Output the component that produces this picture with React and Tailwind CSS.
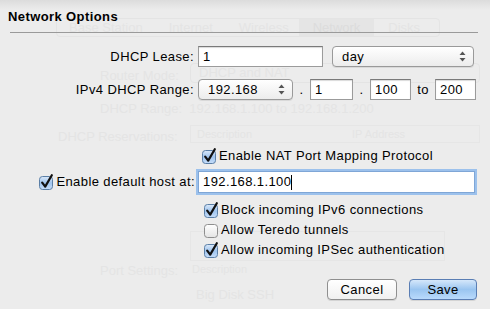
import React from "react";

const font = { fontFamily: '"Liberation Sans", Arial, sans-serif', letterSpacing: "0.4px" };

function Check({ on }) {
  return (
    <svg width="16" height="16" viewBox="0 0 16 16" className="shrink-0">
      <defs>
        <linearGradient id="cbOn" x1="0" y1="0" x2="0" y2="1">
          <stop offset="0" stopColor="#dbe9f9" />
          <stop offset="0.5" stopColor="#9fc4ee" />
          <stop offset="1" stopColor="#c7defa" />
        </linearGradient>
        <linearGradient id="cbOff" x1="0" y1="0" x2="0" y2="1">
          <stop offset="0" stopColor="#ffffff" />
          <stop offset="1" stopColor="#e4e4e4" />
        </linearGradient>
      </defs>
      <rect x="1.5" y="2.5" width="13" height="13" rx="3" fill={on ? "url(#cbOn)" : "url(#cbOff)"} stroke={on ? "#5b7fa6" : "#8e8e8e"} />
      {on && (
        <path d="M4.2 8.6 L7.2 12.6 L13.8 1.2" fill="none" stroke="#111" strokeWidth="2.2" strokeLinecap="round" strokeLinejoin="round" />
      )}
    </svg>
  );
}

function Arrows() {
  return (
    <svg width="7" height="11" viewBox="0 0 7 11">
      <path d="M3.5 0.5 L6.5 4 L0.5 4 Z" fill="#555" />
      <path d="M3.5 10.5 L6.5 7 L0.5 7 Z" fill="#555" />
    </svg>
  );
}

function Field({ w, value }) {
  return (
    <div className={`h-[21px] bg-white border border-[#9b9b9b] border-t-[#7a7a7a] shadow-[inset_0_1px_1px_rgba(0,0,0,0.15)] flex items-center px-[4px] text-[13px] text-black ${w}`}>
      {value}
    </div>
  );
}

function Select({ w, value }) {
  return (
    <div className={`h-[21px] rounded-[4px] border border-[#9a9a9a] bg-gradient-to-b from-white to-[#ececec] shadow-[0_1px_0_rgba(0,0,0,0.08)] flex items-center justify-between pl-[9px] pr-[7px] text-[13px] text-black ${w}`}>
      <span>{value}</span>
      <Arrows />
    </div>
  );
}

export default function App() {
  return (
    <div className="relative w-[490px] h-[309px] overflow-hidden bg-[#ececec] text-black" style={font}>
      {/* ghost window behind the sheet */}
      <div className="absolute inset-0 text-[13px] tracking-normal whitespace-nowrap text-[#e4e4e4] pointer-events-none">
        <div className="absolute left-[56px] top-[18px] w-[384px] h-[19px] rounded-[4px] border border-[#e4e4e4] flex items-center">
          <span className="ml-[12px]">Base Station</span>
          <span className="ml-[26px]">Internet</span>
          <span className="ml-[26px]">Wireless</span>
          <span className="ml-[10px] px-[14px] h-full bg-[#e5e5e5] text-[#dcdcdc] flex items-center">Network</span>
          <span className="ml-[14px]">Disks</span>
        </div>
        <div className="absolute left-[100px] top-[66px]">Router Mode:</div>
        <div className="absolute left-[190px] top-[63px] w-[290px] h-[20px] rounded-[4px] border border-[#e4e4e4] pl-[8px] flex items-center">DHCP and NAT</div>
        <div className="absolute left-[100px] top-[99px]">DHCP Range:&nbsp;&nbsp;192.168.1.100 to 192.168.1.200</div>
        <div className="absolute left-[58px] top-[127px]">DHCP Reservations:</div>
        <div className="absolute left-[190px] top-[125px] w-[290px] h-[18px] border border-[#e6e6e6] text-[11px] flex items-center pl-[6px]">
          <span>Description</span>
          <span className="ml-[100px]">IP Address</span>
        </div>
        <div className="absolute left-[190px] top-[231px] w-[255px] h-[30px] border border-[#e6e6e6]" />
        <div className="absolute left-[100px] top-[261px]">Port Settings:</div>
        <div className="absolute left-[192px] top-[261px] text-[11px]">Description</div>
        <div className="absolute left-[196px] top-[285px]">Big Disk SSH</div>
      </div>

      {/* sheet */}
      <div className="relative flex flex-col h-full">
        <div className="h-[10px] bg-gradient-to-b from-[#dcdcdc] to-[#ececec]" />
        <div className="pl-[8px] -mt-[1px] text-[13px] font-bold leading-[16px]">Network Options</div>
        <div className="mx-[10px] mt-[7px] h-px bg-[#9a9a9a] w-[468px]" />

        <div className="flex items-center mt-[13px] h-[21px]">
          <div className="w-[198px] text-right text-[13px] pr-[4px]">DHCP Lease:</div>
          <Field w="w-[125px]" value="1" />
          <div className="ml-[9px]"><Select w="w-[142px]" value="day" /></div>
        </div>

        <div className="flex items-center mt-[12px] h-[21px] text-[13px]">
          <div className="w-[198px] text-right pr-[4px]">IPv4 DHCP Range:</div>
          <Select w="w-[95px]" value="192.168" />
          <span className="w-[17px] text-center">.</span>
          <Field w="w-[43px]" value="1" />
          <span className="w-[17px] text-center">.</span>
          <Field w="w-[41px]" value="100" />
          <span className="w-[24px] text-center">to</span>
          <Field w="w-[41px]" value="200" />
        </div>

        <div className="flex items-center mt-[48px] ml-[201px] h-[16px] gap-[2px] text-[13px]">
          <Check on />
          <span>Enable NAT Port Mapping Protocol</span>
        </div>

        <div className="flex items-center mt-[7px] h-[22px] text-[13px]">
          <div className="w-[198px] flex items-center justify-end gap-[2px] pr-[3px]">
            <Check on />
            <span>Enable default host at:</span>
          </div>
          <div className="w-[277px] h-[22px] bg-white border border-[#7fa6d6] shadow-[0_0_0_2px_#9cc1ec] flex items-center px-[4px]">
            <span>192.168.1.100</span>
            <span className="w-px h-[15px] bg-black" />
          </div>
        </div>

        <div className="flex flex-col ml-[203px] mt-[9px] text-[13px] gap-[4px]">
          <div className="flex items-center gap-[2px] h-[16px]"><Check on /><span>Block incoming IPv6 connections</span></div>
          <div className="flex items-center gap-[2px] h-[16px]"><Check /><span>Allow Teredo tunnels</span></div>
          <div className="flex items-center gap-[2px] h-[16px]"><Check on /><span>Allow incoming IPSec authentication</span></div>
        </div>

        <div className="flex justify-end gap-[12px] pr-[13px] mt-[21px] text-[13px]">
          <div className="w-[70px] h-[21px] rounded-[4px] border border-[#8f8f8f] bg-gradient-to-b from-white to-[#f0f0f0] flex items-center justify-center shadow-[0_1px_0_rgba(0,0,0,0.1)]">Cancel</div>
          <div className="w-[68px] h-[21px] rounded-[4px] border border-[#5a7eb4] bg-gradient-to-b from-[#d5e7fa] via-[#9ac5f0] to-[#b9dafc] flex items-center justify-center shadow-[0_1px_0_rgba(0,0,0,0.1)]">Save</div>
        </div>
      </div>
    </div>
  );
}
